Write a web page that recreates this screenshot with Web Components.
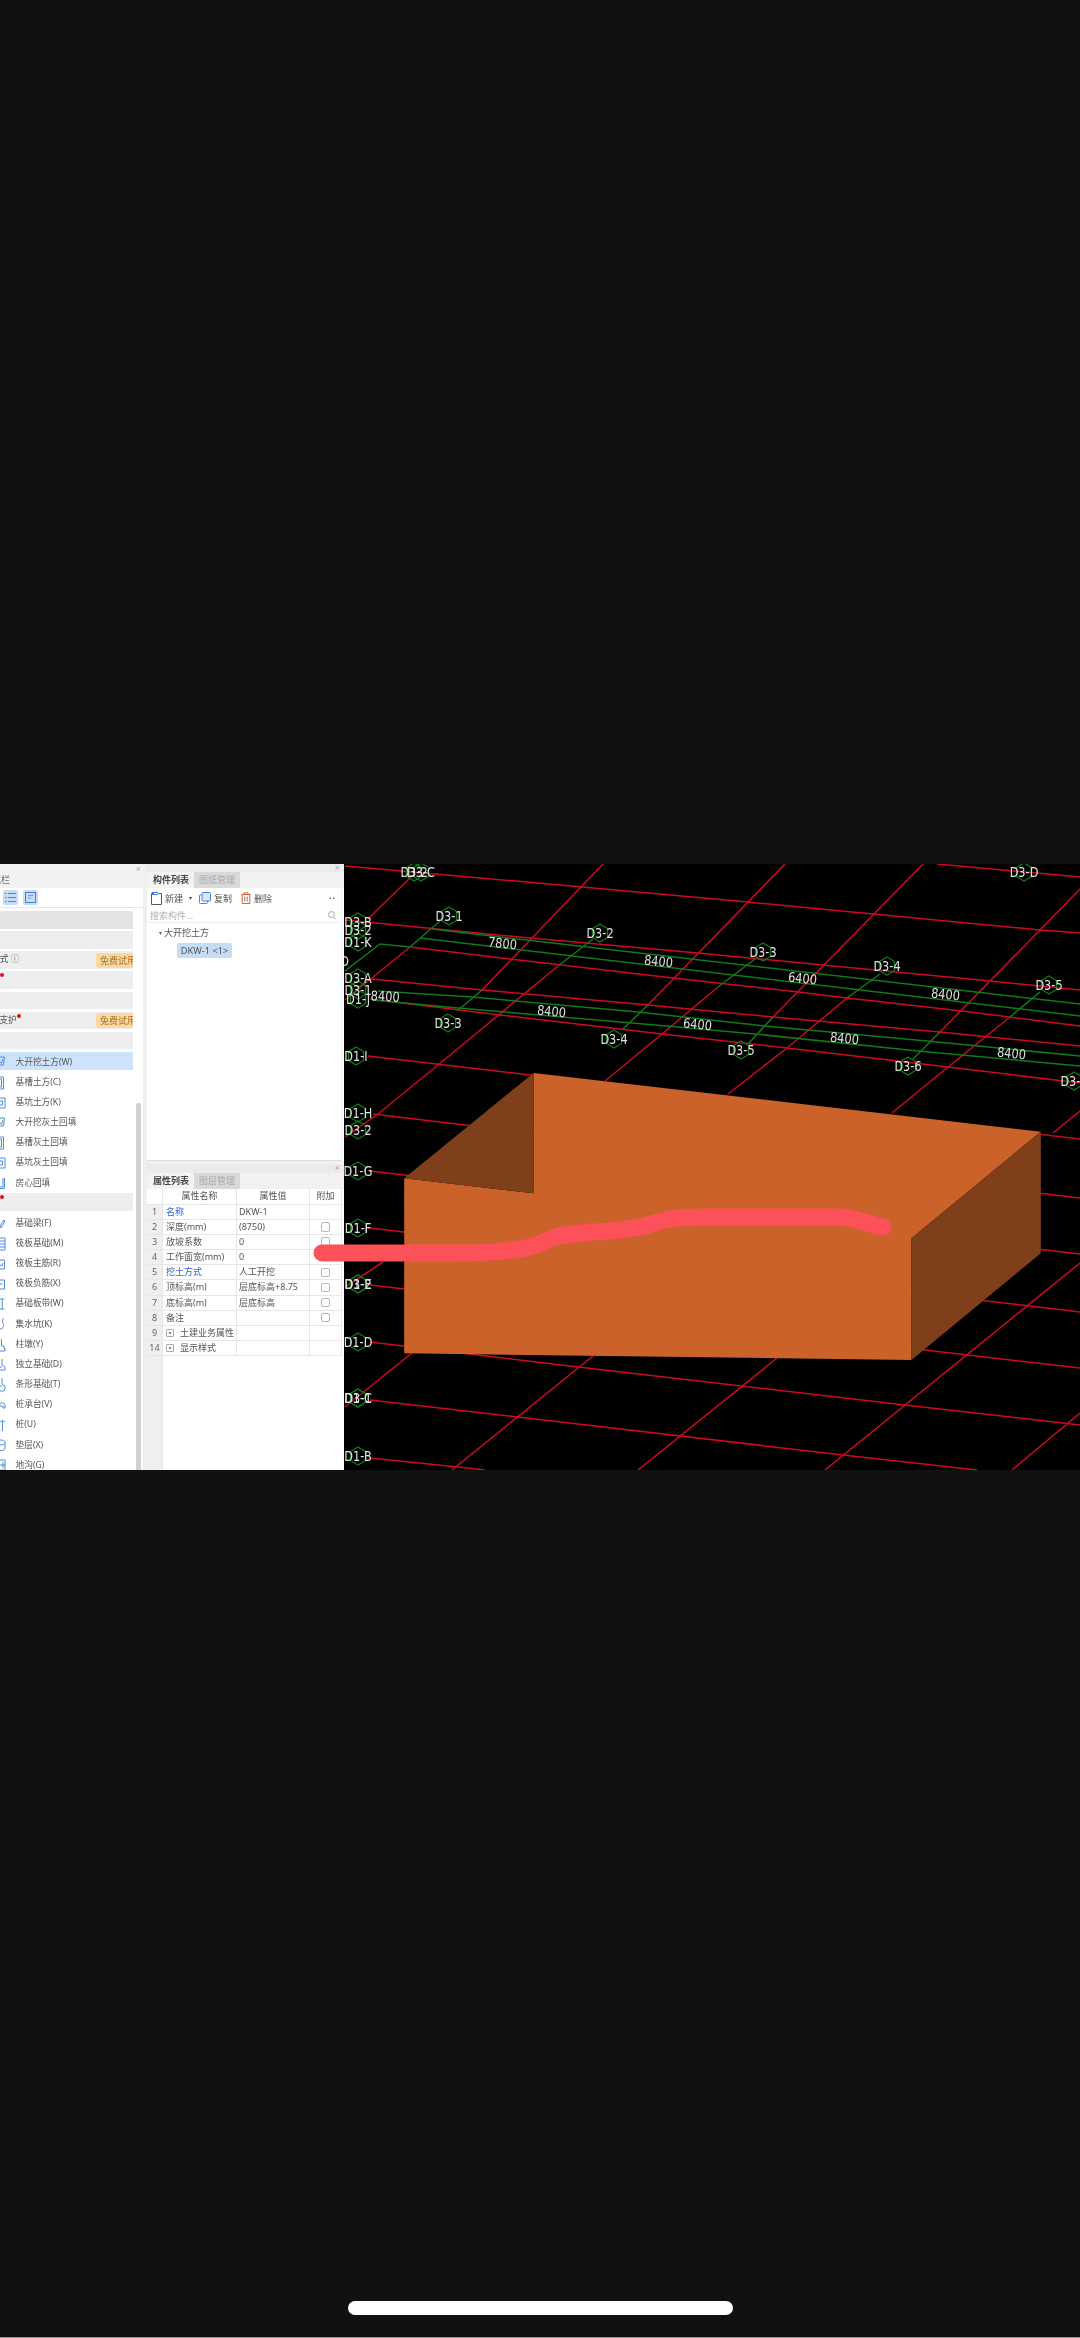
<!DOCTYPE html>
<html lang="zh">
<head>
<meta charset="utf-8">
<title>CAD</title>
<style>
html,body{margin:0;padding:0;background:#111}
body{font-family:"Noto Sans","Noto Sans CJK SC",sans-serif;font-size:9px;color:#555}
</style>
</head>
<body>
<app-frame>
  <cad-stage>
    <nav-panel title-text="导航栏">
      <nav-row shade="dark"></nav-row>
      <nav-row shade="grey"></nav-row>
      <nav-row shade="grey" flush><span style="margin-left:-9px">模式</span><span style="margin-left:2px;color:#777">ⓘ</span><trial-badge>免费试用</trial-badge></nav-row>
      <nav-row shade="grey" flush><red-dot style="left:0"></red-dot></nav-row>
      <nav-row shade="grey"></nav-row>
      <nav-row shade="grey" flush><span style="margin-left:-18px">边坡支护</span><red-dot style="left:17px"></red-dot><trial-badge>免费试用</trial-badge></nav-row>
      <nav-row shade="grey"></nav-row>
      <nav-row shade="selected" icon="a">大开挖土方(W)</nav-row>
      <nav-row icon="b">基槽土方(C)</nav-row>
      <nav-row icon="c">基坑土方(K)</nav-row>
      <nav-row icon="a">大开挖灰土回填</nav-row>
      <nav-row icon="b">基槽灰土回填</nav-row>
      <nav-row icon="c">基坑灰土回填</nav-row>
      <nav-row icon="g">房心回填</nav-row>
      <nav-row shade="grey" flush><red-dot style="left:0"></red-dot></nav-row>
      <nav-row icon="h">基础梁(F)</nav-row>
      <nav-row icon="i">筏板基础(M)</nav-row>
      <nav-row icon="j">筏板主筋(R)</nav-row>
      <nav-row icon="k">筏板负筋(X)</nav-row>
      <nav-row icon="l">基础板带(W)</nav-row>
      <nav-row icon="m">集水坑(K)</nav-row>
      <nav-row icon="n">柱墩(Y)</nav-row>
      <nav-row icon="o">独立基础(D)</nav-row>
      <nav-row icon="p">条形基础(T)</nav-row>
      <nav-row icon="q">桩承台(V)</nav-row>
      <nav-row icon="r">桩(U)</nav-row>
      <nav-row icon="s">垫层(X)</nav-row>
      <nav-row icon="t">地沟(G)</nav-row>
    </nav-panel>
    <dock-column>
      <dock-panel style="height:297px">
        <tab-item active>构件列表</tab-item><tab-item>图纸管理</tab-item>
        <component-list slot="body"></component-list>
      </dock-panel>
      <dock-panel style="height:306px;margin-top:3px" tall>
        <tab-item active>属性列表</tab-item><tab-item>图层管理</tab-item>
        <prop-table slot="body">
          <prop-row header><span slot="name">属性名称</span><span slot="value">属性值</span><span slot="add">附加</span></prop-row>
          <prop-row num="1"><span slot="name" style="color:#2f63d6">名称</span><span slot="value">DKW-1</span></prop-row>
          <prop-row num="2" check><span slot="name">深度(mm)</span><span slot="value">(8750)</span></prop-row>
          <prop-row num="3" check><span slot="name">放坡系数</span><span slot="value">0</span></prop-row>
          <prop-row num="4"><span slot="name">工作面宽(mm)</span><span slot="value">0</span></prop-row>
          <prop-row num="5" check><span slot="name" style="color:#2f63d6">挖土方式</span><span slot="value">人工开挖</span></prop-row>
          <prop-row num="6" check><span slot="name">顶标高(m)</span><span slot="value">层底标高+8.75</span></prop-row>
          <prop-row num="7" check><span slot="name">底标高(m)</span><span slot="value">层底标高</span></prop-row>
          <prop-row num="8" check><span slot="name">备注</span></prop-row>
          <prop-row num="9" expand><span slot="name">土建业务属性</span></prop-row>
          <prop-row num="14" expand><span slot="name">显示样式</span></prop-row>
          <prop-row filler></prop-row>
        </prop-table>
      </dock-panel>
    </dock-column>
    <cad-view></cad-view>
    <ink-stroke></ink-stroke>
  </cad-stage>
</app-frame>

<script>
const FONT='"Noto Sans","Noto Sans CJK SC",sans-serif';
function def(name,css,html){
  customElements.define(name,class extends HTMLElement{
    constructor(){super();const r=this.attachShadow({mode:'open'});r.innerHTML='<style>'+css+'</style>'+(typeof html==='function'?html(this):html);}
  });
}

def('app-frame',`:host{display:flex;flex-direction:column;height:2338px;box-sizing:border-box;padding-top:864px;background:#111;overflow:hidden}
.sp{height:831px;flex:none}
.bar{width:385px;height:14px;border-radius:7px;background:#fff;align-self:center;flex:none}
.end{margin-top:auto;height:1px;background:#9a9a9a}`,
`<slot></slot><div class="sp"></div><div class="bar"></div><div class="end"></div>`);

def('cad-stage',`:host{display:flex;height:606px;position:relative;flex:none;overflow:hidden;background:#efefef}`,`<slot></slot>`);

const ICONS={
 a:'M0 2h4.500l-1 8H0M0 7l1.500 1.500L3 4',
 b:'M0 1h3.500v12H0M0 3h1.500v8H0',
 c:'M0 2h5v10H0M0 5h2.500v4H0',
 g:'M3 2v9H0M4.500 2v10.500H0',
 h:'M0 9L4 3l1 1L1 11z',
 i:'M0 1h5v12H0M0 4h5M0 7h5M0 10h5',
 j:'M0 3h4.500v9H0M0 8l2 1 1-3',
 k:'M0 3h4.500v9H0M0 7h2.500',
 l:'M0 2h4.500M0 12h4.500M2.200 2v10',
 m:'M3.500 1C1 5 5 8 3 10.500 2 12 0 12 0 12',
 n:'M1.500 1v7h2.500v2.500H5V13H0',
 o:'M2 1v6l3 2v3H0M0 9h2',
 p:'M2 0v6l3 2v2l-1 3H0M0 8h2',
 q:'M0 6q3-3 5 1v3H3V8H0',
 r:'M0 4q3-3 5 0M2.500 3v10',
 s:'M0 2q5 0 5 2.500V10q0 2.500-5 2.500M0 7q5 0 5-2.500',
 t:'M0 2h5v10H0M3 4v6M0 7h5'
};
def('nav-panel',`:host{display:flex;flex-direction:column;width:143px;flex:none;background:#fff;font-family:${FONT};font-size:8.7px;color:#555;overflow:hidden;filter:blur(.35px);margin-right:4px}
.ttl{height:24px;background:#f2f2f2;display:flex;justify-content:space-between;box-sizing:border-box;flex:none}
.ttl b{font-weight:400;margin-left:-17px;padding-top:10px;color:#666;font-size:9px;line-height:11px}
.ttl i{font-style:normal;color:#aaa;font-size:9px;line-height:9px;padding:0 2px 0 0}
.tb{height:20px;flex:none;display:flex;align-items:center;gap:5px;padding-left:3px;border-bottom:1px solid #e8e8e8;box-sizing:border-box}
.btn{width:15px;height:15px;background:#c6dcf6;border-radius:2px;display:flex;align-items:center;justify-content:center}
.main{flex:1;display:flex;padding-top:3px;min-height:0}
.list{width:133px;flex:none;overflow:hidden}
.track{width:5px;margin-left:3px;padding-top:192px;flex:none}
.thumb{height:400px;background:#d0d0d0;border-radius:2px}`,
h=>`<div class="ttl"><b>${h.getAttribute('title-text')}</b><i>×</i></div>
<div class="tb"><div class="btn"><svg width="13" height="11" viewBox="0 0 13 11" fill="none" stroke="#4a86d8"><path d="M1 1.500h1.500M4 1.500h8M1 5.500h1.500M4 5.500h8M1 9.500h1.500M4 9.500h8"/></svg></div>
<div class="btn"><svg width="11" height="11" viewBox="0 0 11 11" fill="none" stroke="#4a86d8"><rect x=".5" y=".5" width="10" height="10"/><path d="M3 3.500h5M3 6h3" stroke-width=".7"/></svg></div></div>
<div class="main"><div class="list"><slot></slot></div><div class="track"><div class="thumb"></div></div></div>`);

def('nav-row',`:host{display:flex;align-items:center;height:17.5px;margin-bottom:2.67px;position:relative;white-space:nowrap;line-height:17.5px;box-sizing:border-box}
:host([icon]){padding-top:3px}
:host([shade=grey]){background:#eeeeee}
:host([shade=dark]){background:#e3e3e3}
:host([shade=selected]){background:#cde3fb}
.ic{width:6px;flex:none;margin-right:9.5px;display:flex}
:host([flush]) .ic,:host(:not([icon])) .ic{display:none}
slot{display:contents}`,
h=>{const k=h.getAttribute('icon');return `<span class="ic">${k?`<svg width="6" height="14" viewBox="0 0 6 14" fill="none" stroke="#4e8bdc" stroke-width="1"><path d="${ICONS[k]}"/></svg>`:''}</span><slot></slot>`});

def('red-dot',`:host{display:block;position:absolute;top:2px;width:4px;height:4px;border-radius:50%;background:#e8091e}`,``);
def('trial-badge',`:host{display:block;margin-left:auto;width:37px;height:15px;flex:none;background:#f8d9a3;border-radius:3px 0 0 3px;color:#a8701f;font-size:9px;line-height:15px;padding-left:4px;box-sizing:border-box;overflow:hidden;white-space:nowrap}`,`<slot></slot>`);

def('dock-column',`:host{display:flex;flex-direction:column;width:197px;flex:none;background:#f0f0f0;filter:blur(.35px)}`,`<slot></slot>`);
def('dock-panel',`:host{display:flex;flex-direction:column;flex:none;background:#fff;font-family:${FONT};font-size:9px;color:#555;overflow:hidden}
.st{height:8px;flex:none;background:#ebebeb;display:flex;justify-content:flex-end;color:#aaa;font-size:9px;line-height:8px;padding-right:4px}
:host([tall]) .st{height:9px}
.tabs{display:flex;height:16px;flex:none;background:#f1f1f1;padding-left:1px}
.b{flex:1;min-height:0;display:flex;flex-direction:column;padding-right:2px}`,
`<div class="st">×</div><div class="tabs"><slot></slot></div><div class="b"><slot name="body"></slot></div>`);
def('tab-item',`:host{display:block;width:46px;text-align:center;background:#d9d9d9;color:#a8a8a8;line-height:16px;font-size:9px}
:host([active]){background:#f3f3f3;color:#444;font-weight:700}`,`<slot></slot>`);

def('component-list',`:host{display:flex;flex-direction:column;flex:1;color:#555;border-bottom:1px solid #ddd;border-right:1px solid #eee}
.tb{height:20px;display:flex;align-items:center;padding-left:4px;flex:none;white-space:nowrap}
.tb svg{flex:none}
.s{height:14px;display:flex;align-items:center;justify-content:space-between;padding:0 5px 0 3px;color:#b0b0b0;border-bottom:1px solid #eee;flex:none}
.t{padding:3px 0 0 12px;line-height:14px}
.t i{font-style:normal;font-size:6px;margin-right:2px;vertical-align:1px;color:#666}
.chip{display:block;margin:3px 0 0 18px;width:55px;height:15px;line-height:15px;background:#c5dcf5;border-radius:2px;text-align:center;font-size:9.2px;white-space:nowrap}`,
`<div class="tb">
<svg width="11" height="13" viewBox="0 0 11 13" fill="none" stroke="#555"><path d="M3 1.500H.5v11h10v-11H8"/><path d="M1 .5h6v2H1z" stroke="#4a86d8"/></svg>
<span style="margin-left:3px">新建</span><span style="margin-left:6px;font-size:6px">▾</span>
<svg style="margin-left:7px" width="12" height="12" viewBox="0 0 12 12" fill="#d9e8fa" stroke="#4a86d8"><rect x=".5" y="3" width="8" height="8.500" rx="1" fill="#fff"/><rect x="3" y=".5" width="8.500" height="8.500" rx="1"/></svg>
<span style="margin-left:3px">复制</span>
<svg style="margin-left:9px" width="10" height="12" viewBox="0 0 10 12" fill="none" stroke="#c0562c"><path d="M.5 2.500h9M3 2.500V.8h4v1.700M1.200 2.500v9h7.600v-9M3.800 4.500v5M6.200 4.500v5" stroke-width=".9"/></svg>
<span style="margin-left:3px">删除</span><span style="margin-left:auto;margin-right:5px;font-weight:700;letter-spacing:1px;line-height:8px">··</span></div>
<div class="s"><span>搜索构件...</span><svg width="8" height="8" viewBox="0 0 8 8" fill="none" stroke="#aaa"><circle cx="3.500" cy="3.500" r="3"/><path d="M6 6l2 2"/></svg></div>
<div class="t"><i>▾</i>大开挖土方<span class="chip">DKW-1 &lt;1&gt;</span></div>`);

def('prop-table',`:host{display:flex;flex-direction:column;flex:1;min-height:0}`,`<slot></slot>`);
def('prop-row',`:host{display:grid;grid-template-columns:16px 74px 73px 1fr;height:15.1px;flex:none;line-height:14.1px;white-space:nowrap;color:#555}
:host([header]){height:16px}
:host([filler]){flex:1;height:auto}
div{border-right:1px solid #e6e6e6;border-bottom:1px solid #e6e6e6;box-sizing:border-box;display:flex;align-items:center;overflow:hidden}
.n{background:#efefef;justify-content:center;color:#666}
.v{padding-left:2px}.m{padding-left:3px}.a{justify-content:center}
:host([header]) .m,:host([header]) .v,:host([header]) .a{justify-content:center;padding:0}
:host([header]) .n{background:#fff}
:host([filler]) div{border:0}
:host([filler]) .n{border-right:1px solid #e6e6e6}
.c{width:9.5px;height:9.5px;border:1px solid #b5b5b5;border-radius:2px;box-sizing:border-box;background:#fff;display:block}
.e{width:8px;height:8px;border:1px solid #aaa;box-sizing:border-box;margin-right:6px;display:flex;align-items:center;justify-content:center;flex:none;border-radius:1px}
.e::after{content:"";width:2px;height:2px;background:#888}`,
h=>`<div class="n">${h.getAttribute('num')||''}</div>
<div class="m">${h.hasAttribute('expand')?'<span class="e"></span>':''}<slot name="name"></slot></div>
<div class="v"><slot name="value"></slot></div>
<div class="a"><slot name="add"></slot>${h.hasAttribute('check')?'<span class="c"></span>':''}</div>`);

/* ---- 3D view: its place on a free canvas is the content itself ---- */
const RED=[
 [[345,866],[582,887],[748,902],[873,914],[1040,930],[1080,933]],
 [[937,864],[1080,877]],
 [[345,920],[530,938],[698,953],[823,965],[990,981],[1080,990]],
 [[410,947],[510,959],[673,978],[798,992],[847,998],[962,1011],[1080,1026]],
 [[372,979],[482,990],[527,994],[648,1005],[773,1017],[940,1032],[1080,1046]],
 [[370,999],[500,1015],[662,1034],[787,1048],[948,1067],[1080,1083]],
 [[368,1056],[1080,1139]],[[373,1114],[1080,1198]],[[370,1171],[1080,1254]],
 [[370,1228],[1080,1312]],[[370,1285],[925,1350],[1080,1368]],
 [[370,1342],[578,1367],[905,1405],[1080,1425]],
 [[370,1400],[518,1417],[843,1455],[977,1470]],
 [[370,1458],[458,1467],[485,1470]],
 [[412,876],[368,919]],
 [[410,947],[345,1000]],
 [[603,864],[482,990]],
 [[558,966],[438,1065],[378,1114],[345,1137]],
 [[785,864],[648,1005]],
 [[718,987],[662,1034],[605,1081]],
 [[923,864],[773,1017]],
 [[847,998],[787,1048],[728,1094]],
 [[1080,889],[1040,930],[940,1032]],
 [[1010,1017],[948,1067],[892,1113]],
 [[1080,1111],[1053,1133]],
 [[413,1352],[345,1407]],[[383,1262],[345,1287]],
 [[593,1356],[452,1470]],[[777,1358],[638,1470]],
 [[1080,1263],[825,1470]],[[1080,1413],[1012,1470]]
];
const GREEN=[
 [[432,929],[1080,1004]],[[420,938],[1080,1016]],
 [[378,991],[472,997],[638,1012],[765,1026],[927,1041],[1080,1056]],
 [[372,1000],[458,1008],[678,1027],[755,1034],[918,1051],[1080,1066]],
 [[345,971],[380,944],[410,947]],
 [[440,921],[410,947]],[[482,990],[457,1011]],[[593,939],[558,966]],[[648,1005],[623,1029]],
 [[755,959],[718,987]],[[773,1017],[748,1044]],[[880,974],[847,998]],[[940,1032],[913,1059]],[[1040,992],[1010,1017]]
];
const LABELS=[
 ['D3-2',414,872],['D3-C',421,872],['D3-1',449,916],['D3-2',600,933],['D3-B',358,922],['D3-2',358,930],['D1-K',358,942],
 ['D3-A',358,978],['D3-1',358,990],['D1-J',358,999],['D3-3',448,1023],['D3-4',614,1039],['D1-I',356,1056],['D1-H',358,1113],['D3-2',358,1130],
 ['D3-3',763,952],['D3-4',887,966],['D3-5',1049,985],['D3-5',741,1050],['D3-6',908,1066],['D3-7',1074,1081],['D3-D',1024,872],
 ['D1-G',358,1171],['D1-F',358,1228],['D1-E',358,1284],['D3-2',358,1284],['D1-D',358,1342],['D1-C',358,1398],['D3-1',358,1398],['D1-B',358,1456]
];
const DIMS=[['8400',385,996,3],['7800',502,943,6],['8400',658,961,6],['8400',551,1011,6],['6400',697,1024,6],['6400',802,978,6],['8400',945,994,6],['8400',844,1038,6],['8400',1011,1053,6]];
const pl=p=>p.map(a=>a.join(',')).join(' ');
const hex=(x,y)=>{const rx=7.5,ry=9;return [[x,y-ry],[x+rx,y-ry/2],[x+rx,y+ry/2],[x,y+ry],[x-rx,y+ry/2],[x-rx,y-ry/2]].map(a=>a.map(v=>v.toFixed(1)).join(',')).join(' ')};
def('cad-view',`:host{display:block;flex:1;min-width:0;background:#000;overflow:hidden}
svg{display:block;filter:blur(.25px)}
text{font-family:"DejaVu Sans",sans-serif;font-size:13.5px;fill:#dfe5df;text-anchor:middle}`,
`<svg width="736" height="606" viewBox="344 864 736 606">
<g fill="none" stroke="#cc0a20" stroke-width="1.5">${RED.map(p=>`<polyline points="${pl(p)}"/>`).join('')}</g>
<g fill="none" stroke="#127a18" stroke-width="1.5">${GREEN.map(p=>`<polyline points="${pl(p)}"/>`).join('')}</g>
<polygon points="533.5,1073 1040.8,1131.7 911.5,1238.3 911.5,1360 404.2,1353.3 404.2,1178.3 533.5,1193.3" fill="#cb622a"/>
<polygon points="404.2,1178.3 533.5,1073 533.5,1193.3" fill="#7f3f1b"/>
<polygon points="1040.8,1131.7 1040.8,1253.3 911.5,1360 911.5,1238.3" fill="#7f3f1b"/>
<g fill="none" stroke="#127a18" stroke-width="1.3">${LABELS.map(l=>`<polygon points="${hex(l[1],l[2])}"/>`).join('')}</g>
${LABELS.map(l=>`<text transform="translate(${l[1]} ${l[2]+5}) scale(.84 1)">${l[0]}</text>`).join('')}
<text transform="translate(349 966) scale(.84 1)" style="text-anchor:end">D</text>
${DIMS.map(l=>`<text transform="translate(${l[1]} ${l[2]+5}) rotate(${l[3]}) scale(.84 1)">${l[0]}</text>`).join('')}
</svg>`);

def('ink-stroke',`:host{display:block;position:absolute;left:0;top:0;width:1080px;height:606px;pointer-events:none}svg{display:block;filter:blur(.3px)}`,
`<svg width="1080" height="606" viewBox="0 864 1080 606"><path d="M322 1253 L458 1253 C490 1253 520 1251 540 1244 C552 1236 565 1234 595 1232 C615 1231 630 1229 645 1226 C660 1220 680 1217 700 1217 L843 1217 C855 1218 868 1224 883 1227" fill="none" stroke="#fc5158" stroke-width="17" stroke-linecap="round" stroke-linejoin="round"/></svg>`);
</script>
</body>
</html>
